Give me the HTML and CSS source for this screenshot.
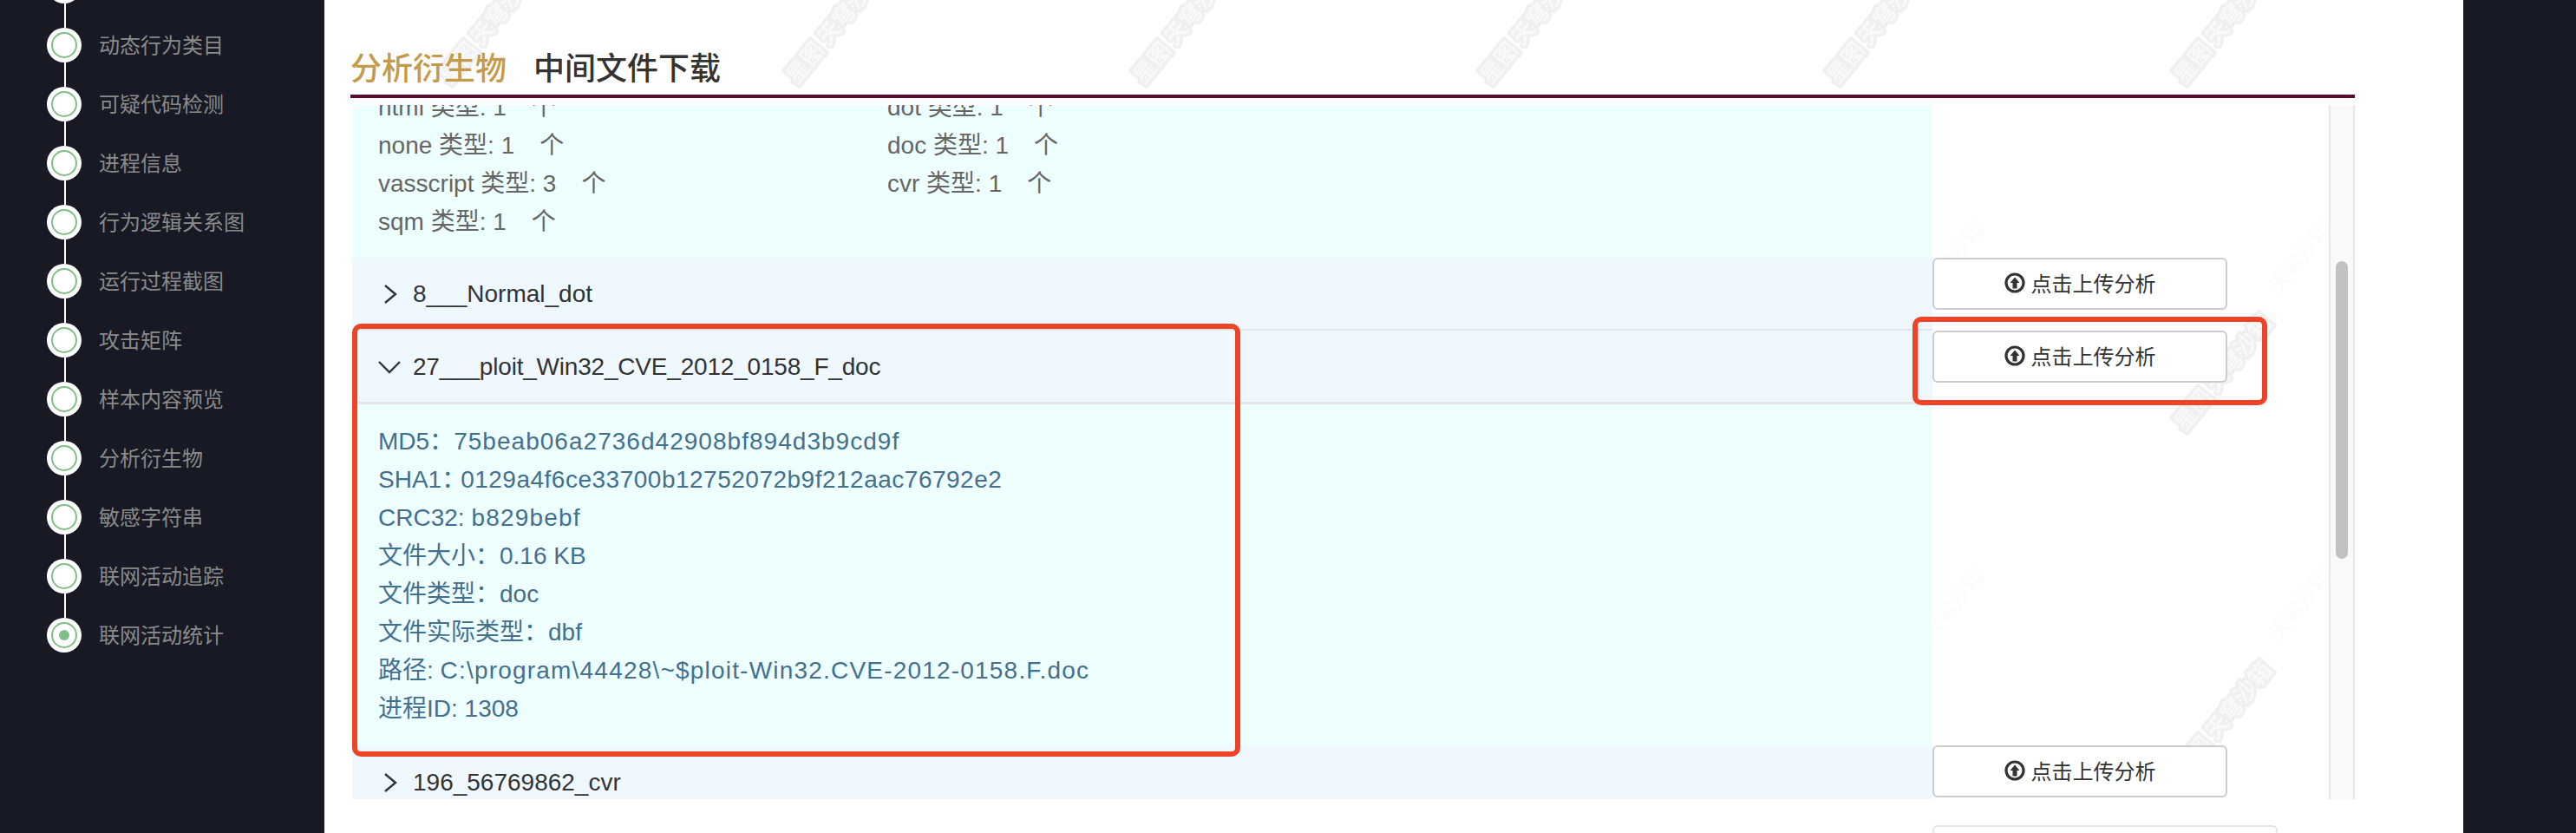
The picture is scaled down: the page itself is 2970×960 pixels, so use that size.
FILE: index.html
```html
<!DOCTYPE html>
<html lang="zh-CN">
<head>
<meta charset="utf-8">
<title>分析衍生物</title>
<link rel="stylesheet" href="styles.css">
</head>
<body>
<div class="page">
  <nav class="steps">
    <div class="step"><div class="node"><span class="dot"><span class="ring"></span></span><span class="link"></span></div><span class="label"></span></div>
    <div class="step"><div class="node"><span class="dot"><span class="ring"></span></span><span class="link"></span></div><span class="label">动态行为类目</span></div>
    <div class="step"><div class="node"><span class="dot"><span class="ring"></span></span><span class="link"></span></div><span class="label">可疑代码检测</span></div>
    <div class="step"><div class="node"><span class="dot"><span class="ring"></span></span><span class="link"></span></div><span class="label">进程信息</span></div>
    <div class="step"><div class="node"><span class="dot"><span class="ring"></span></span><span class="link"></span></div><span class="label">行为逻辑关系图</span></div>
    <div class="step"><div class="node"><span class="dot"><span class="ring"></span></span><span class="link"></span></div><span class="label">运行过程截图</span></div>
    <div class="step"><div class="node"><span class="dot"><span class="ring"></span></span><span class="link"></span></div><span class="label">攻击矩阵</span></div>
    <div class="step"><div class="node"><span class="dot"><span class="ring"></span></span><span class="link"></span></div><span class="label">样本内容预览</span></div>
    <div class="step"><div class="node"><span class="dot"><span class="ring"></span></span><span class="link"></span></div><span class="label">分析衍生物</span></div>
    <div class="step"><div class="node"><span class="dot"><span class="ring"></span></span><span class="link"></span></div><span class="label">敏感字符串</span></div>
    <div class="step"><div class="node"><span class="dot"><span class="ring"></span></span><span class="link"></span></div><span class="label">联网活动追踪</span></div>
    <div class="step"><div class="node"><span class="dot"><span class="ring"><span class="pip"></span></span></span></div><span class="label">联网活动统计</span></div>
  </nav>

  <main class="main">
    <svg class="watermark" width="100%" height="100%" aria-hidden="true">
      <defs>
        <pattern id="wm" width="400" height="400" patternUnits="userSpaceOnUse" patternTransform="translate(0 -200)">
          <text class="wm-text" transform="translate(187 228) rotate(-51)" text-anchor="middle" dominant-baseline="central">星图 天穹沙箱</text>
          <text class="wm-faint" transform="translate(276 95) rotate(-51)" text-anchor="middle" dominant-baseline="central">天穹沙箱</text>
        </pattern>
      </defs>
      <rect width="100%" height="100%" fill="url(#wm)"></rect>
    </svg>

    <header class="tabs">
      <span class="tab tab-active">分析衍生物</span>
      <span class="tab">中间文件下载</span>
    </header>

    <section class="scroller">
      <div class="list">
        <div class="row">
          <div class="cell">
            <div class="detail detail-types">
              <div class="types">
                <p>html 类型: 1<span class="unit">个</span></p><p>dot 类型: 1<span class="unit">个</span></p>
                <p>none 类型: 1<span class="unit">个</span></p><p>doc 类型: 1<span class="unit">个</span></p>
                <p>vasscript 类型: 3<span class="unit">个</span></p><p>cvr 类型: 1<span class="unit">个</span></p>
                <p>sqm 类型: 1<span class="unit">个</span></p>
              </div>
            </div>
          </div>
        </div>

        <div class="row">
          <div class="cell">
            <div class="head head-thin">
              <svg class="chev" width="26" height="26" viewBox="0 0 26 26"><path d="M8 3l12 10L8 23"></path></svg>
              <span>8___Normal_dot</span>
            </div>
          </div>
          <div class="action"><button class="btn"><svg class="up" width="24" height="24" viewBox="0 0 24 24"><circle cx="12" cy="12" r="10"></circle><path class="arrow" d="M12 5.500l5.500 6.500H14.500v6.500h-5V12H6.500z"></path></svg>点击上传分析</button></div>
        </div>

        <div class="row">
          <div class="cell">
            <div class="head head-thick">
              <svg class="chev" width="26" height="26" viewBox="0 0 26 26"><path d="M1 7l12 12L25 7"></path></svg>
              <span class="name-long">27___ploit_Win32_CVE_2012_0158_F_doc</span>
            </div>
            <div class="detail detail-file">
              <p>MD5：<span class="val-md5">75beab06a2736d42908bf894d3b9cd9f</span></p>
              <p>SHA1：<span class="val-sha">0129a4f6ce33700b12752072b9f212aac76792e2</span></p>
              <p>CRC32: <span class="val-crc">b829bebf</span></p>
              <p>文件大小：0.16 KB</p>
              <p>文件类型：doc</p>
              <p>文件实际类型：dbf</p>
              <p>路径: <span class="val-path">C:\program\44428\~$ploit-Win32.CVE-2012-0158.F.doc</span></p>
              <p>进程ID: 1308</p>
            </div>
          </div>
          <div class="action"><button class="btn"><svg class="up" width="24" height="24" viewBox="0 0 24 24"><circle cx="12" cy="12" r="10"></circle><path class="arrow" d="M12 5.500l5.500 6.500H14.500v6.500h-5V12H6.500z"></path></svg>点击上传分析</button></div>
        </div>

        <div class="row">
          <div class="cell">
            <div class="head">
              <svg class="chev" width="26" height="26" viewBox="0 0 26 26"><path d="M8 3l12 10L8 23"></path></svg>
              <span>196_56769862_cvr</span>
            </div>
          </div>
          <div class="action"><button class="btn"><svg class="up" width="24" height="24" viewBox="0 0 24 24"><circle cx="12" cy="12" r="10"></circle><path class="arrow" d="M12 5.500l5.500 6.500H14.500v6.500h-5V12H6.500z"></path></svg>点击上传分析</button></div>
        </div>
      </div>
      <div class="scrollbar"><div class="thumb"></div></div>
    </section>

    <div class="next"><div class="next-box"></div></div>

    <div class="mark mark-left"></div>
    <div class="mark mark-right"></div>
  </main>

  <aside class="gutter"></aside>
</div>
</body>
</html>
```

FILE: styles.css
```css
* { box-sizing: border-box; }
html, body { margin: 0; height: 100%; overflow: hidden; }
body {
  font-family: "Liberation Sans", "Noto Sans CJK SC", sans-serif;
  background: #171a24;
}
p { margin: 0; }

.page { display: flex; height: 960px; overflow: hidden; }

/* step rail */
.steps {
  width: 374px;
  flex: none;
  background: #171a24;
  padding-left: 54px;
  margin-top: -36px;
}
.step { display: flex; height: 68px; gap: 20px; }
.node { display: flex; flex-direction: column; align-items: center; width: 40px; }
.dot {
  width: 40px;
  height: 40px;
  flex: none;
  border-radius: 50%;
  background: #fff;
  display: flex;
  align-items: center;
  justify-content: center;
}
.ring {
  width: 30px;
  height: 30px;
  border: 2px solid #7fc088;
  border-radius: 50%;
  display: flex;
  align-items: center;
  justify-content: center;
}
.pip { width: 12px; height: 12px; border-radius: 50%; background: #7fc088; }
.link { width: 2px; height: 28px; background: #fff; margin-left: 2px; }
.label {
  font-size: 24px;
  line-height: 42px;
  height: 42px;
  color: #8a8a8a;
  white-space: nowrap;
}

/* main card */
.main {
  flex: 1;
  min-width: 0;
  position: relative;
  background: #fff;
  padding: 0 125px 0 30px;
  display: flex;
  flex-direction: column;
}
.watermark { position: absolute; left: 0; top: 0; width: 100%; height: 100%; }
.wm-text {
  font-family: "Noto Sans CJK SC", sans-serif;
  font-size: 26px;
  font-weight: 700;
  fill: #f9f9f9;
  stroke: #f0f0f0;
  stroke-width: 7px;
  stroke-linejoin: round;
  paint-order: stroke;
}
.wm-faint {
  font-family: "Noto Sans CJK SC", sans-serif;
  font-size: 24px;
  fill: #fbfbfb;
}

.tabs {
  position: relative;
  height: 113px;
  flex: none;
  display: flex;
  align-items: flex-end;
  gap: 31px;
  padding-bottom: 4px;
  border-bottom: 4px solid #5c0b33;
}
.tab { font-size: 36px; line-height: 50px; font-weight: 500; color: #333; }
.tab-active { color: #c49a4b; }

.scroller {
  position: relative;
  flex: none;
  height: 800px;
  margin: 8px 0 0 2px;
  display: flex;
  overflow: hidden;
}
.list { flex: 1; min-width: 0; }
.row { display: flex; }
.cell { width: 1822px; flex: none; }
.action { flex: 1; min-width: 0; }

.detail { background: #eeffff; font-size: 28px; line-height: 44px; padding-left: 30px; }
.detail-types { margin-top: -19px; padding-bottom: 20px; height: 195px; color: #666; }
.types { display: grid; grid-template-columns: 587px 1fr; }
.unit { margin-left: 29px; }
.detail-file { color: #44708f; padding-top: 21px; padding-bottom: 20px; }
.val-md5 { letter-spacing: 1.030px; }
.val-sha { letter-spacing: .5px; margin-left: -6px; }
.val-crc { letter-spacing: 1.200px; }
.val-path { letter-spacing: 1.200px; }

.head {
  display: flex;
  align-items: center;
  background: #f0f8ff;
  height: 84px;
  padding: 2px 0 0 30px;
  gap: 14px;
  font-size: 28px;
  color: #333;
}
.head-thin { border-bottom: 2px solid #e5e5e5; }
.head-thick { height: 85px; border-bottom: 3px solid #e5e5e5; }
.name-long { letter-spacing: -.2px; }
.chev { flex: none; }
.chev path { fill: none; stroke: #333; stroke-width: 2.400; }

.btn {
  display: flex;
  align-items: center;
  justify-content: center;
  gap: 7px;
  width: 340px;
  height: 60px;
  padding: 0 0 3px;
  background: #fff;
  border: 2px solid #ccc;
  border-radius: 6px;
  font: inherit;
  font-size: 24px;
  color: #333;
}
.up circle { fill: none; stroke: #333; stroke-width: 3.200; }
.up .arrow { fill: #333; stroke: none; }

.scrollbar {
  flex: none;
  width: 30px;
  background: #f9f9f9;
  border-left: 2px solid #e8e8e8;
  border-right: 2px solid #e8e8e8;
  padding: 180px 6px 0;
}
.thumb { height: 343px; border-radius: 8px; background: #c1c1c1; }

.next { position: relative; flex: none; margin: 30px 0 0 1824px; }
.next-box {
  width: 398px;
  height: 60px;
  background: #fff;
  border: 2px solid #e5e5e5;
  border-radius: 6px;
}

/* red annotation frames */
.mark {
  position: absolute;
  border: 6px solid #ef4328;
  border-radius: 10px;
}
.mark-left { left: 32px; top: 373px; width: 1024px; height: 499px; }
.mark-right { left: 1831px; top: 365px; width: 409px; height: 102px; }

.gutter { width: 130px; flex: none; background: #171a24; }
```
